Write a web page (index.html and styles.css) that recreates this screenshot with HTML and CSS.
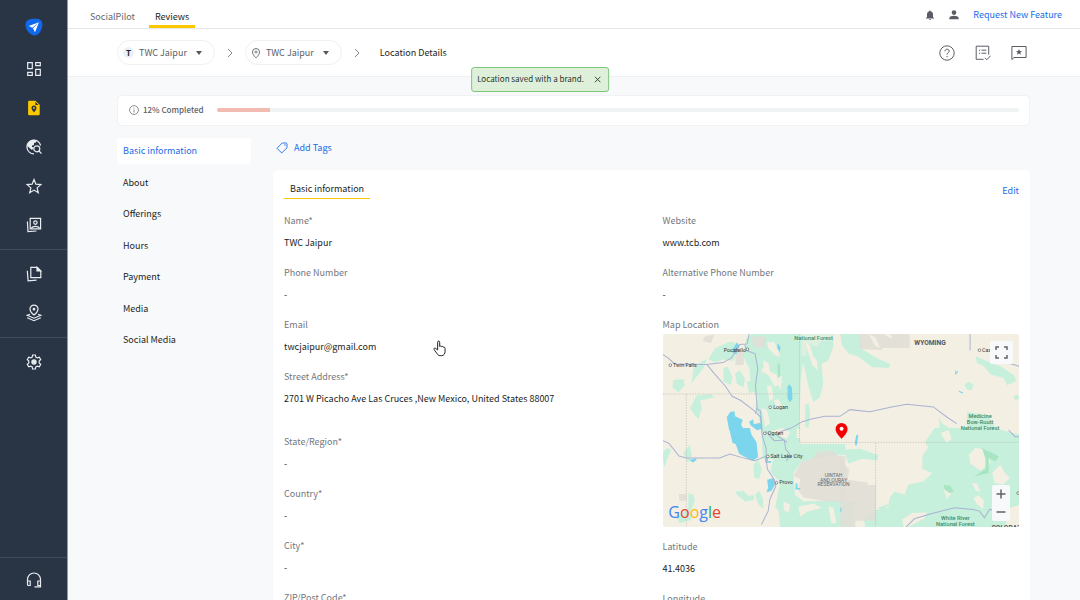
FILE: index.html
```html
<!DOCTYPE html>
<html lang="en">
<head>
<meta charset="utf-8">
<meta name="viewport" content="width=device-width, initial-scale=1">
<title>Location Details</title>
<link rel="stylesheet" href="styles.css">
</head>
<body>
<div class="app">
  <aside class="sidebar">
    <a class="logo" href="#" aria-label="Home">
      <svg width="18" height="18" viewBox="0 0 18 18"><path d="M9 .8C14 .6 17.6 1.600 17.400 6.500 17.200 12 14 17.400 9.800 17.400 5.500 17.400.6 12.500.5 7 .5 2 4.500.9 9 .8z" fill="#1068eb"/><path d="M14 4.200 3.700 8l3.600 1.700zM14 4.200 8 10.200l2 4z" fill="#fff"/></svg>
    </a>
    <nav class="side-group side-first" aria-label="Main">
      <a class="side-link" href="#" aria-label="Dashboard"><svg class="ico" viewBox="0 0 16 16"><path d="M1.700 1.700h4.600v6H1.700zM9.700 1.700h4.600v3H9.700zM1.700 11.300h4.600v3H1.700zM9.700 8.300h4.600v6H9.700z"/></svg></a>
      <a class="side-link" href="#" aria-label="Listings"><svg class="ico" viewBox="0 0 16 16"><path d="M3.300.8h6.200l4.200 4v9.200a1.200 1.200 0 0 1-1.200 1.200H3.300A1.200 1.200 0 0 1 2.100 14V2A1.200 1.200 0 0 1 3.300.8z" fill="#fcc800" stroke="none"/><path d="M9.400 1.800V5h3.200z" fill="#293545" stroke="none"/><path d="M8 5.600a2.500 2.500 0 0 0-2.500 2.500C5.500 10 8 12.400 8 12.400s2.500-2.400 2.500-4.300A2.500 2.500 0 0 0 8 5.600z" fill="#293545" stroke="none"/><circle cx="8" cy="8" r=".9" fill="#fcc800" stroke="none"/></svg></a>
      <a class="side-link" href="#" aria-label="Search presence"><svg class="ico" viewBox="0 0 16 16"><path d="M14.600 6.500A6.900 6.900 0 1 0 8 14.900" /><path d="M1 6.500C1.500 3 4.500 1 8 1l2.500.5-.5 2-2 .5v2L6 6.500V8l2 .5-2 2.500-2.500-2z" fill="#e9edf1" stroke="none"/><circle cx="10.800" cy="9.800" r="3"/><path d="m13 12 2.500 2.700"/></svg></a>
      <a class="side-link" href="#" aria-label="Reviews"><svg class="ico" viewBox="0 0 16 16"><path d="m8 1.500 1.900 4.700 5 .4-3.800 3.300 1.200 4.900L8 12.100l-4.300 2.700 1.200-4.900-3.800-3.300 5-.4z"/></svg></a>
      <a class="side-link" href="#" aria-label="Profiles"><svg class="ico" viewBox="0 0 16 16"><path d="M4.200 1.400h10.400v10.400H4.200zM1.400 4.500 2 14.600l8.500-.6"/><circle cx="9.400" cy="5.600" r="1.700"/><path d="M5 11.400c2-2.600 6.800-2.600 8.800 0" /></svg></a>
    </nav>
    <nav class="side-group" aria-label="Content">
      <a class="side-link" href="#" aria-label="Posts"><svg class="ico" viewBox="0 0 16 16"><path d="M4.800 1.400h6.400l3.600 3.500v6.700H4.800zM1.300 4.800 2.100 14.900l8.400-.8"/><path d="M11 1.400V5h3.700z" fill="#e9edf1"/></svg></a>
      <a class="side-link" href="#" aria-label="Locations"><svg class="ico" viewBox="0 0 16 16"><path d="M8 .1a4 4 0 0 0-4 4c0 3 4 6 4 6s4-3 4-6a4 4 0 0 0-4-4z"/><circle cx="8" cy="4.200" r=".8" fill="#e9edf1"/><path d="M4 9.200 1.200 10.200 8 13.200l6.800-3L12 9.200M1.200 12.700 8 15.700l6.800-3"/></svg></a>
    </nav>
    <nav class="side-group" aria-label="Preferences">
      <a class="side-link" href="#" aria-label="Settings"><svg class="ico" viewBox="0 0 16 16"><path d="m6.600 1-.4 2-1.500.9-2-.7-1.400 2.400 1.500 1.400v2L1.300 10.400l1.400 2.400 2-.7 1.500.9.400 2h2.800l.4-2 1.500-.9 2 .7 1.400-2.400L13.200 9V7l1.500-1.400-1.400-2.400-2 .7L9.800 3l-.4-2z"/><circle cx="8" cy="8" r="2.100" fill="#e9edf1"/></svg></a>
    </nav>
    <div class="side-group side-bottom">
      <a class="side-link" href="#" aria-label="Support"><svg class="ico" viewBox="0 0 16 16"><path d="M1.500 10V7.500a6.500 6.500 0 0 1 13 0v7.300H8.500M1.500 9h2.700v4.500H2.500a1 1 0 0 1-1-1zM14.500 9h-2.700v4.500h2.700"/></svg></a>
    </div>
  </aside>

  <div class="page">
    <header class="topbar">
      <nav class="tabs" aria-label="Products">
        <a class="tab" href="#">SocialPilot</a>
        <a class="tab tab-active" href="#">Reviews</a>
      </nav>
      <div class="top-actions">
        <button class="plain" aria-label="Notifications"><svg class="solid" viewBox="0 0 10 10"><path d="M5 .5c.5 0 .7.3.7.700C7.300 1.600 8 2.900 8 4.300V7l1 1v.4H1V8l1-1V4.300c0-1.400.7-2.700 2.300-3.100 0-.4.200-.700.7-.700zM4 8.900h2a1 .9 0 0 1-2 0z"/></svg></button>
        <button class="plain" aria-label="Account"><svg class="solid" viewBox="0 0 10 10"><circle cx="5" cy="2.600" r="2.300"/><path d="M.3 9.300V8C.3 6.500 3 5.800 5 5.800s4.700.7 4.700 2.200v1.300z"/></svg></button>
        <a class="link" href="#">Request New Feature</a>
      </div>
    </header>

    <div class="crumbbar">
      <nav class="crumbs" aria-label="Breadcrumb">
        <button class="pill" aria-haspopup="listbox"><span class="avatar">T</span>TWC Jaipur<svg class="caret" viewBox="0 0 6 4"><path d="M0 0h6L3 4z"/></svg></button>
        <svg class="chev" viewBox="0 0 6 10"><path d="m1 1 4 4-4 4"/></svg>
        <button class="pill" aria-haspopup="listbox"><svg class="pin" viewBox="0 0 10 12"><path d="M5 1.500a3.500 3.500 0 0 0-3.500 3.500C1.500 7.600 5 11 5 11s3.500-3.400 3.500-6A3.500 3.500 0 0 0 5 1.500z"/><circle cx="5" cy="5" r="1"/></svg>TWC Jaipur<svg class="caret" viewBox="0 0 6 4"><path d="M0 0h6L3 4z"/></svg></button>
        <svg class="chev" viewBox="0 0 6 10"><path d="m1 1 4 4-4 4"/></svg>
        <span class="current">Location Details</span>
      </nav>
      <div class="tools">
        <button class="plain" aria-label="Help"><svg class="tool" viewBox="0 0 16 16"><circle cx="8" cy="8" r="7.200"/><path d="M5.900 6.300C5.900 5 6.800 4.200 8 4.200s2.200.8 2.200 1.900C10.200 7.700 8 7.700 8 9.600M8 11v1.200"/></svg></button>
        <button class="plain" aria-label="Tasks"><svg class="tool" viewBox="0 0 16 16"><path d="M8.500 14.300H1.200V1.200h12.500v8.500M4 5.200h1.200M6.500 5.200h4.800M4 8.200h1.200M6.500 8.200h4.800M9.800 12.800l2 2 3.600-4"/></svg></button>
        <button class="plain" aria-label="Feedback"><svg class="tool" viewBox="0 0 16 16"><path d="M.9 14.600V1.500h14.200v11H3z"/><path d="m8 4 .9 2 2.100.2-1.600 1.400.5 2.100L8 8.600 6.100 9.700l.5-2.100L5 6.200 7.100 6z" fill="#5a5e64" stroke="none"/></svg></button>
      </div>
    </div>

    <main class="content">
      <section class="progress-card">
        <svg class="info" viewBox="0 0 10 10"><circle cx="5" cy="5" r="4.400"/><path d="M5 4.500v3M5 2.500v1"/></svg>
        <label class="progress-label" for="done">12% Completed</label>
        <progress class="bar" id="done" value="12" max="180"></progress>
      </section>

      <div class="columns">
        <nav class="sections" aria-label="Sections">
          <a class="section section-active" href="#">Basic information</a>
          <a class="section" href="#">About</a>
          <a class="section" href="#">Offerings</a>
          <a class="section" href="#">Hours</a>
          <a class="section" href="#">Payment</a>
          <a class="section" href="#">Media</a>
          <a class="section" href="#">Social Media</a>
        </nav>

        <div class="detail">
          <button class="add-tags"><svg width="12" height="12" viewBox="0 0 12 12"><path d="M6.200 1h4.200l.6.6v4.200L5.700 11 1 6.300z"/><circle cx="9" cy="3" r=".3"/></svg>Add Tags</button>
          <section class="card">
            <div class="card-head">
              <h2 class="card-title">Basic information</h2>
              <a class="link" href="#">Edit</a>
            </div>
            <div class="fields">
              <dl class="col">
                <div class="field"><dt>Name*</dt><dd>TWC Jaipur</dd></div>
                <div class="field"><dt>Phone Number</dt><dd>-</dd></div>
                <div class="field"><dt>Email</dt><dd>twcjaipur@gmail.com</dd></div>
                <div class="field field-long"><dt>Street Address*</dt><dd>2701 W Picacho Ave Las Cruces ,New Mexico, United States 88007</dd></div>
                <div class="field"><dt>State/Region*</dt><dd>-</dd></div>
                <div class="field"><dt>Country*</dt><dd>-</dd></div>
                <div class="field"><dt>City*</dt><dd>-</dd></div>
                <div class="field"><dt>ZIP/Post Code*</dt><dd>-</dd></div>
              </dl>
              <dl class="col">
                <div class="field"><dt>Website</dt><dd>www.tcb.com</dd></div>
                <div class="field"><dt>Alternative Phone Number</dt><dd>-</dd></div>
                <div class="field field-map"><dt>Map Location</dt><dd class="map">
                  <svg class="map-art" viewBox="0 0 1068 579" preserveAspectRatio="xMidYMid slice" role="img" aria-label="Map around Salt Lake City">
                    <rect width="1068" height="579" fill="#f4efe3"/>
                    <g transform="translate(-24 -12)">
                      <g class="wood">
                        <path d="M290 12h246l-2 40-15 40-20 10 5 60-10 40-20 15-15-50-15-70-8 60-3 130 20 70-60 30h-70l-5-100-18-55 8-30-20-25-5-60-20-40 10-50z"/>
                        <path d="M180 55l45-20 25 8-15 50-30-5-25 10-20-10zM110 160l5-45 25-20 15-8-8 25zM55 150l30-3 5 20-20 20-18-15zM105 235l20-38 40-5 15 10-45 10 5 25-10 30-10-10zM205 115l12-5 15 30-5 25-22-10zM240 130l15-8 15 25-5 25-20-10zM275 155l20-5 5 35-18 5zM450 225l10-5 5 30-5 45-10-5z"/>
                      </g>
                      <path class="sand" d="M335 38l22-2 12 25 6 20-15-5-20-20zM325 90l15 10 5 25 20 10 5 30-12 5-15-30-18-15zM370 135l10 5-3 40-8-15zM335 165l15 5 5 35-12 8zM318 115l8 5-3 15zM450 35l15 12 8 30 12 15 2 30-15-15-10-30zM355 210l15-2 12 25-8 12zM320 235l15 5 10 40-15 10z"/>
                      <path class="sand" d="M438 12h98v20l-40 2-10 18-25-12-10 40-13-5z" opacity=".5"/>
                      <path class="gray" d="M290 20h42v32h-38zM241 62h25v43h-25zM150 20l28-6-10 25-25-5z"/>
                      <path class="water" d="M228 65l18-28 7 12-10 25zM368 40l8 12-2 14-8-12zM397 170l5-6 8 8 2 35-8 10-7-12zM215 262l10-16 13-2 2 15 23 10-5 15 12 20-18 20-30-25zM282 275l12-7 2 15 20-5 5 18-15 5-20-15z"/>
                      <path d="M367 100l8 2v38l-7 3z" fill="#a8e6c3"/>
                    </g>
                    <g transform="translate(531 -12)">
                      <path class="wood" d="M0 12h60l5 45 40 25 45 20-5 12-50-3-40-30-30-10-20-25zM405 78l40 18 40 15 35 25 8 18-28 12-10-22-40-10-20-25-20-10zM372 165l12-10 15 8-5 18-15-2zM518 198l14-4 5 12-12 6zM295 262l12 20 18 10-25 30h-20l18-25zM380 245l60 10 30 45h-90z"/>
                      <path class="gray" d="M58 12h150v42h-80l-5 6-65-3z"/>
                      <path class="sand" d="M85 12l20 12 15 30-15-5zM128 12h20l10 15-12-5z"/>
                      <path class="fine-water" d="M346 122v10l7-8M355 184l13 5"/>
                    </g>
                    <g transform="translate(-24 282)">
                      <g class="wood">
                        <path d="M320 0h250v80l-60 5-70 15-25 35 5 65 25 20 90-3 65 5-10 80H375l-5-55-10-10 15-75-30-30 10-40-30-60zM295 110l15-15 10 30-8 28-15-5zM240 190l25-2 15 15 18-2-2 15-25 5-25-20zM300 200l12-12 12 25v30l-15-15zM20 75l18-15 10 5-20 50zM85 75l18-25 8 30-12 25zM65 270l35-30v-45l15 5 5 20-15 30 5 25-35 10z"/>
                      </g>
                      <path class="sand" d="M435 0h135v48H435z"/>
                      <path class="sand" d="M350 10l30-10 25 12-10 20-20-8zM425 0l35 20-15 20-20-12zM420 140l15 5-5 20-12-8zM385 220l20 10-5 25-15-10zM430 235l45-8 25 12-45 12-20 15zM520 235l15 5 8 45h-15z"/>
                      <path class="gray" d="M440 100l35-10 10-18 45-5 20 18h20v135h-55l-70-12-15-20 5-35-20-10zM72 198h22v20H72z"/>
                      <path class="water" d="M222 0h62l5 20 15 22 5 45-17 12-40-22-10-28-10-5zM336 155l20-5 3 20-10 18-15 5 5-15zM422 165l5 3v12h8v4h-14zM102 96l22-5v5l-10 7zM330 85h8v14h10v5h-18z"/>
                    </g>
                    <g transform="translate(531 282)">
                      <path class="wood" d="M282 0h180l75 20v210l-30 10-10-15v75H75l-5-30 38-25 35-5 5-30 15-20 30 10 10-30 45-10 28-25-30-12v-40l18-25-10-15zM10 65l50-3 55 20-5 15-45-5-40 15zM110 240l35-13-10 20z"/>
                      <path class="sand" d="M385 80l20-20 35 5 10 40-30 22-30-20zM310 185l15-5 10 12-15 22zM185 275l30-20 45-2-10 20-40 20-20 5zM455 135l25-25 10 20 18 20-20 20-25-5zM400 210l15-8 15 15-2 25-20-15zM465 185l30-8 3 30-20 20zM300 15l25-8 8 25-15 12zM395 165l15 2 10 25-15-5z"/>
                      <path class="gray" d="M0 80l12 30 15 15-5 30 60 8v8h25v107H45v25H0z"/>
                      <path d="M425 60l50 25-10 15-20-10v45l-45 10 35-22v-30zM310 170l20 2 10 20-12 3-15-10z" fill="#a8e6c3"/>
                      <path class="water" d="M44 42l4-20 6-2-4 32h-5zM0 238l4 2-1 12H0z"/>
                    </g>
                    <path class="border" d="M0 180h409M409 0v325h659M70 180v399M637 327v250"/>
                    <path class="road" d="M0 62l15 10 20 18 95 2 50-6 25-14 25-40 22-2 6-30M245 32l6 18 25 10 8 45-7 50 5 65-5 20M132 92l20 25 35 40 20 30 25 12 40 30 20 20 5 55 12 40v36M280 222l12 10 5 60M308 292l25 28 30-2 5 28 12 15-10 20M372 325l-30-20 10-12 30-10 35-20 28-8 40-8h45l30-20 60 6 65-14 45-8 80 8 40 30 30 20M0 320l18 8 30 38 22 6h100l30-12 35 10 40 10 30-12M308 366l5 40 20 30 5 20-18 40-5 35-20 40M728 579l25-25 50-15 70-18 55 5 20 5 15 20 15-25 50 3M1035 288l20 20h13M1035 88l20 5 13 5M920 0v50"/>
                    <g class="town">
                      <circle cx="22" cy="94" r="4"/><text x="30" y="98">Twin Falls</text>
                      <circle cx="253" cy="46" r="4"/><text x="182" y="53">Pocatello</text>
                      <circle cx="321" cy="220" r="4"/><text x="330" y="225">Logan</text>
                      <circle cx="305" cy="298" r="4"/><text x="314" y="303">Ogden</text>
                      <circle cx="314" cy="367" r="4"/><text x="322" y="372">Salt Lake City</text>
                      <circle cx="340" cy="446" r="4"/><text x="348" y="451">Provo</text>
                      <circle cx="948" cy="49" r="4"/><text x="956" y="53">Casper</text>
                      <circle cx="1064" cy="477" r="4"/>
                    </g>
                    <g class="forest">
                      <text x="451" y="17">National Forest</text>
                      <text x="950" y="253">Medicine</text><text x="950" y="271">Bow-Routt</text><text x="950" y="289">National Forest</text>
                      <text x="876" y="557">White River</text><text x="876" y="575">National Forest</text>
                    </g>
                    <g class="reserve"><text x="511" y="428">UINTAH</text><text x="511" y="443">AND OURAY</text><text x="511" y="457">RESERVATION</text></g>
                    <text class="state" x="800" y="32">WYOMING</text>
                    <text class="state" x="1036" y="587">COLORADO</text>
                    <path d="M535 267a18 18 0 0 0-18 18c0 14 18 29 18 29s18-15 18-29a18 18 0 0 0-18-18z" fill="#f40000"/><circle cx="535" cy="284" r="6" fill="#fff"/>
                    <text class="brand" x="16" y="551"><tspan fill="#4285f4">G</tspan><tspan fill="#ea4335">o</tspan><tspan fill="#fbbc05">o</tspan><tspan fill="#4285f4">g</tspan><tspan fill="#34a853">l</tspan><tspan fill="#ea4335">e</tspan></text>
                  </svg>
                  <button class="map-full" aria-label="Full screen"><svg width="13" height="13" viewBox="0 0 13 13"><path d="M1 4V1h3M9 1h3v3M12 9v3H9M4 12H1V9"/></svg></button>
                  <div class="map-zoom">
                    <button aria-label="Zoom in"><svg width="10" height="10" viewBox="0 0 10 10"><path d="M5 .5v9M.5 5h9"/></svg></button>
                    <button aria-label="Zoom out"><svg width="10" height="10" viewBox="0 0 10 10"><path d="M.5 5h9"/></svg></button>
                  </div>
                </dd></div>
                <div class="field"><dt>Latitude</dt><dd>41.4036</dd></div>
                <div class="field"><dt>Longitude</dt><dd>-</dd></div>
              </dl>
            </div>
          </section>
        </div>
      </div>
    </main>
  </div>
</div>

<div class="toast" role="status">Location saved with a brand.<button class="plain" aria-label="Close"><svg width="7" height="7" viewBox="0 0 7 7"><path d="m.7.7 5.600 5.600M6.300.7.7 6.300" stroke="#333" stroke-width=".9"/></svg></button></div>
<svg class="pointer" viewBox="0 0 14 18"><path d="M5 10.500V2.300c0-1.800 2.200-1.800 2.200 0v4.500c.6-.8 1.900-.6 2.100.3.700-.6 1.800-.3 1.900.6.8-.4 1.800 0 1.800 1v3.300c0 2.500-1.200 4.700-3.700 4.700H7.600c-1.600 0-2.400-.8-3.200-2.100L1.200 10.200C.5 8.900 1.900 8 2.900 8.900z"/></svg>
</body>
</html>
```
FILE: styles.css
```css
* { box-sizing: border-box; }

body {
  margin: 0;
  font: 9px/16px "Noto Sans CJK SC", "Noto Sans", sans-serif;
  color: #1b1e22;
  background: #f8f9fb;
  overflow: hidden;
}

a { color: inherit; text-decoration: none; }
button { font: inherit; color: inherit; border: 0; padding: 0; background: none; cursor: pointer; }
svg { display: block; flex: none; fill: none; }
dl, dd, h2 { margin: 0; }

.app { display: flex; height: 100vh; }

/* Sidebar */
.sidebar {
  flex: none;
  width: 68px;
  display: flex;
  flex-direction: column;
  background: #293545;
  border-right: 1px solid #949aa2;
}
.logo { display: flex; justify-content: center; padding: 18px 0 13px; }
.side-group { padding: 4px 0 5px; border-top: 1px solid #414c5a; }
.side-first { padding-top: 0; border-top: 0; }
.side-bottom { margin-top: auto; padding: 2px 0 1px; }
.side-link { display: flex; height: 39px; align-items: center; justify-content: center; }
.ico { width: 16px; height: 16px; stroke: #e9edf1; stroke-width: 1.2; overflow: visible; }

.page { flex: 1; min-width: 0; display: flex; flex-direction: column; }

/* Product tabs */
.topbar {
  flex: none;
  display: flex;
  justify-content: space-between;
  height: 29px;
  padding: 0 18px 0 16px;
  background: #fff;
  border-bottom: 1px solid #e6e7e9;
}
.tabs { display: flex; gap: 8px; }
.tab { padding: 9px 6px 0; color: #65696f; border-bottom: 3px solid transparent; }
.tab-active { color: #1b1e22; border-color: #fcc800; }
.top-actions { display: flex; align-items: center; gap: 14px; padding-top: 2px; }
.solid { width: 10px; height: 10px; fill: #5a5e64; }
.link { color: #176ce8; }

/* Breadcrumb */
.crumbbar {
  flex: none;
  display: flex;
  align-items: center;
  justify-content: space-between;
  height: 48px;
  padding: 0 53px 0 49px;
  background: #fff;
  border-bottom: 1px solid #eff0f2;
}
.crumbs { display: flex; align-items: center; gap: 12px; }
.pill {
  display: flex;
  align-items: center;
  height: 25px;
  padding: 0 12px 0 5px;
  gap: 5px;
  color: #5c6066;
  border: 1px solid #eff0f2;
  border-radius: 13px;
}
.avatar { width: 11px; border-radius: 6px; background: #e9f1fd; color: #222; font-size: 8px; line-height: 11px; font-weight: 700; }
.pin { width: 10px; height: 12px; stroke: #70747a; stroke-width: 1; }
.caret { width: 6px; height: 4px; margin-left: 4px; fill: #55595f; }
.chev { width: 6px; height: 10px; stroke: #85898f; }
.current { padding-left: 8px; }
.tools { display: flex; gap: 20px; }
.tool { width: 16px; height: 16px; stroke: #5a5e64; stroke-width: 1; }

/* Content */
.content { flex: 1; min-height: 0; overflow: hidden; padding: 18px 50px 0 49px; }
.progress-card {
  display: flex;
  align-items: center;
  height: 31px;
  padding: 0 10px 1px 11px;
  background: #fff;
  border: 1px solid #f0f2f4;
  border-radius: 5px;
}
.info { width: 10px; height: 10px; stroke: #70747a; stroke-width: .8; }
.progress-label { margin: 0 13px 0 4px; color: #5c6066; font-size: 8px; font-weight: 500; }
.bar { flex: 1; min-width: 0; height: 4px; appearance: none; border: 0; border-radius: 2px; overflow: hidden; background: #eff3f4; }
.bar::-webkit-progress-bar { background: #eff3f4; }
.bar::-webkit-progress-value { background: #f2bbb1; }

.columns { display: flex; align-items: flex-start; gap: 22px; margin-top: 12px; }
.sections { flex: none; width: 134px; height: 215px; display: flex; flex-direction: column; justify-content: space-between; }
.section { padding: 5px 6px; border-radius: 3px; }
.section-active { color: #176ce8; background: #fff; }

.detail { flex: 1; min-width: 0; }
.add-tags { display: flex; align-items: center; gap: 6px; margin: 2px 3px 14px; color: #176ce8; }
.add-tags svg { stroke: #176ce8; stroke-width: .9; }

.card { padding: 11px 11px 20px; background: #fff; border-radius: 5px; }
.card-head { display: flex; align-items: flex-end; justify-content: space-between; }
.card-title { padding: 0 6px 1px; font-size: 9px; font-weight: 400; border-bottom: 1px solid #fcc800; }
.fields { display: grid; grid-template-columns: 1fr 1fr; gap: 22px; margin-top: 14px; }
.col { min-width: 0; display: flex; flex-direction: column; gap: 14px; }
.field { display: flex; flex-direction: column; gap: 6px; }
.field dt { color: #73777d; }
.field-long { padding-bottom: 13px; }
.field-map { gap: 1px; margin-bottom: -2px; }

/* Map */
.map { position: relative; border-radius: 2px; overflow: hidden; }
.map-art { width: 100%; height: 193px; }
.wood { fill: #c7f0dc; stroke: none; }
.sand { fill: #f4efe3; stroke: none; }
.gray { fill: #dfddd6; stroke: none; opacity: .85; }
.water { fill: #7bd5ec; stroke: none; }
.fine-water { stroke: #7bd5ec; stroke-width: 3; }
.road { stroke: #a9b3d3; stroke-width: 3; fill: none; }
.border { stroke: #b9b6ad; stroke-width: 2; stroke-dasharray: 4 4; fill: none; }
.town { font: 400 16px Roboto, sans-serif; fill: #33353a; }
.town circle { fill: #fff; stroke: #555; stroke-width: 2; }
.forest { font: 500 17px Roboto, sans-serif; fill: #3d8b6b; text-anchor: middle; }
.reserve { font: 400 15px Roboto, sans-serif; fill: #65676b; text-anchor: middle; }
.state { font: 700 20px Roboto, sans-serif; fill: #54565a; text-anchor: middle; }
.brand { font: 500 48px "Open Sans", sans-serif; }
.map-full, .map-zoom { position: absolute; background: #f8f9fb; border-radius: 2px; }
.map-full { top: 7px; right: 6px; width: 23px; height: 23px; display: grid; place-items: center; }
.map-zoom { right: 9px; bottom: 6px; width: 18px; display: grid; }
.map-zoom button { display: grid; place-items: center; height: 18px; }
.map-full svg, .map-zoom svg { stroke: #606368; stroke-width: 1.5; }

/* Overlays */
.toast {
  position: fixed;
  top: 67px;
  left: 50%;
  transform: translateX(-50%);
  display: flex;
  align-items: center;
  gap: 10px;
  padding: 3px 7px 4px 5px;
  font-size: 8px;
  white-space: nowrap;
  color: #26322c;
  background: #dff0da;
  border: 1px solid #7ec67e;
  border-radius: 3px;
}
.pointer { position: fixed; left: 433px; top: 340px; width: 13px; height: 17px; fill: #fff; stroke: #111; stroke-width: 1; }
```
